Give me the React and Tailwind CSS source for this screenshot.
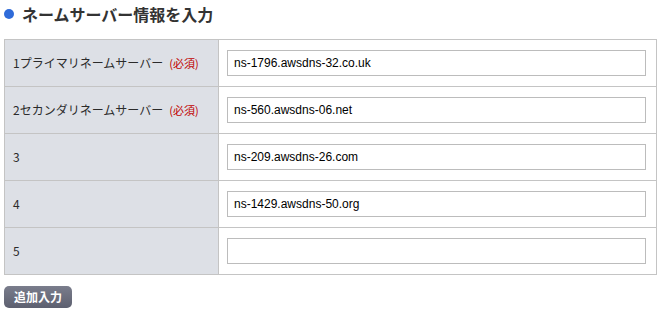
const rows = [
  { label: "1プライマリネームサーバー", required: true, value: "ns-1796.awsdns-32.co.uk" },
  { label: "2セカンダリネームサーバー", required: true, value: "ns-560.awsdns-06.net" },
  { label: "3", value: "ns-209.awsdns-26.com" },
  { label: "4", value: "ns-1429.awsdns-50.org" },
  { label: "5", value: "" },
];

export default function App() {
  return (
    <div className="w-[663px] h-[315px] bg-white px-[4px] pt-[4px] text-[#333] font-['Noto_Sans_CJK_JP',sans-serif]">
      {/* heading */}
      <div className="flex items-center h-[20px]">
        <span className="w-[10px] h-[10px] rounded-full bg-[#2f6bd9]" />
        <h2 className="ml-[8px] text-[16px] font-bold leading-[20px] text-[#333]">ネームサーバー情報を入力</h2>
      </div>

      <table className="mt-[15px] w-[653px] border-collapse border border-[#c4c4c4]">
        <tbody>
          {rows.map((r) => (
            <tr key={r.label} className="h-[47px]">
              <td className="w-[214px] bg-[#dde0e6] border border-[#c4c4c4] pl-[8px] text-[12px] leading-none text-[#2b2b2b]">
                {r.label}
                {r.required && <span className="ml-[6px] text-[11px] text-[#c00000]">(必須)</span>}
              </td>
              <td className="border border-[#c4c4c4] pl-[8px] pr-[10px]">
                <input
                  readOnly
                  value={r.value}
                  className="block w-full h-[26px] border border-[#bcbcbc] px-[6px] text-[12px] text-black font-['Liberation_Sans',Arial,sans-serif] outline-none"
                />
              </td>
            </tr>
          ))}
        </tbody>
      </table>

      <button className="mt-[11px] h-[22px] w-[68px] rounded-[5px] bg-gradient-to-b from-[#7a7d8c] to-[#5d6070] text-white text-[12px] font-bold leading-none">
        追加入力
      </button>
    </div>
  );
}
